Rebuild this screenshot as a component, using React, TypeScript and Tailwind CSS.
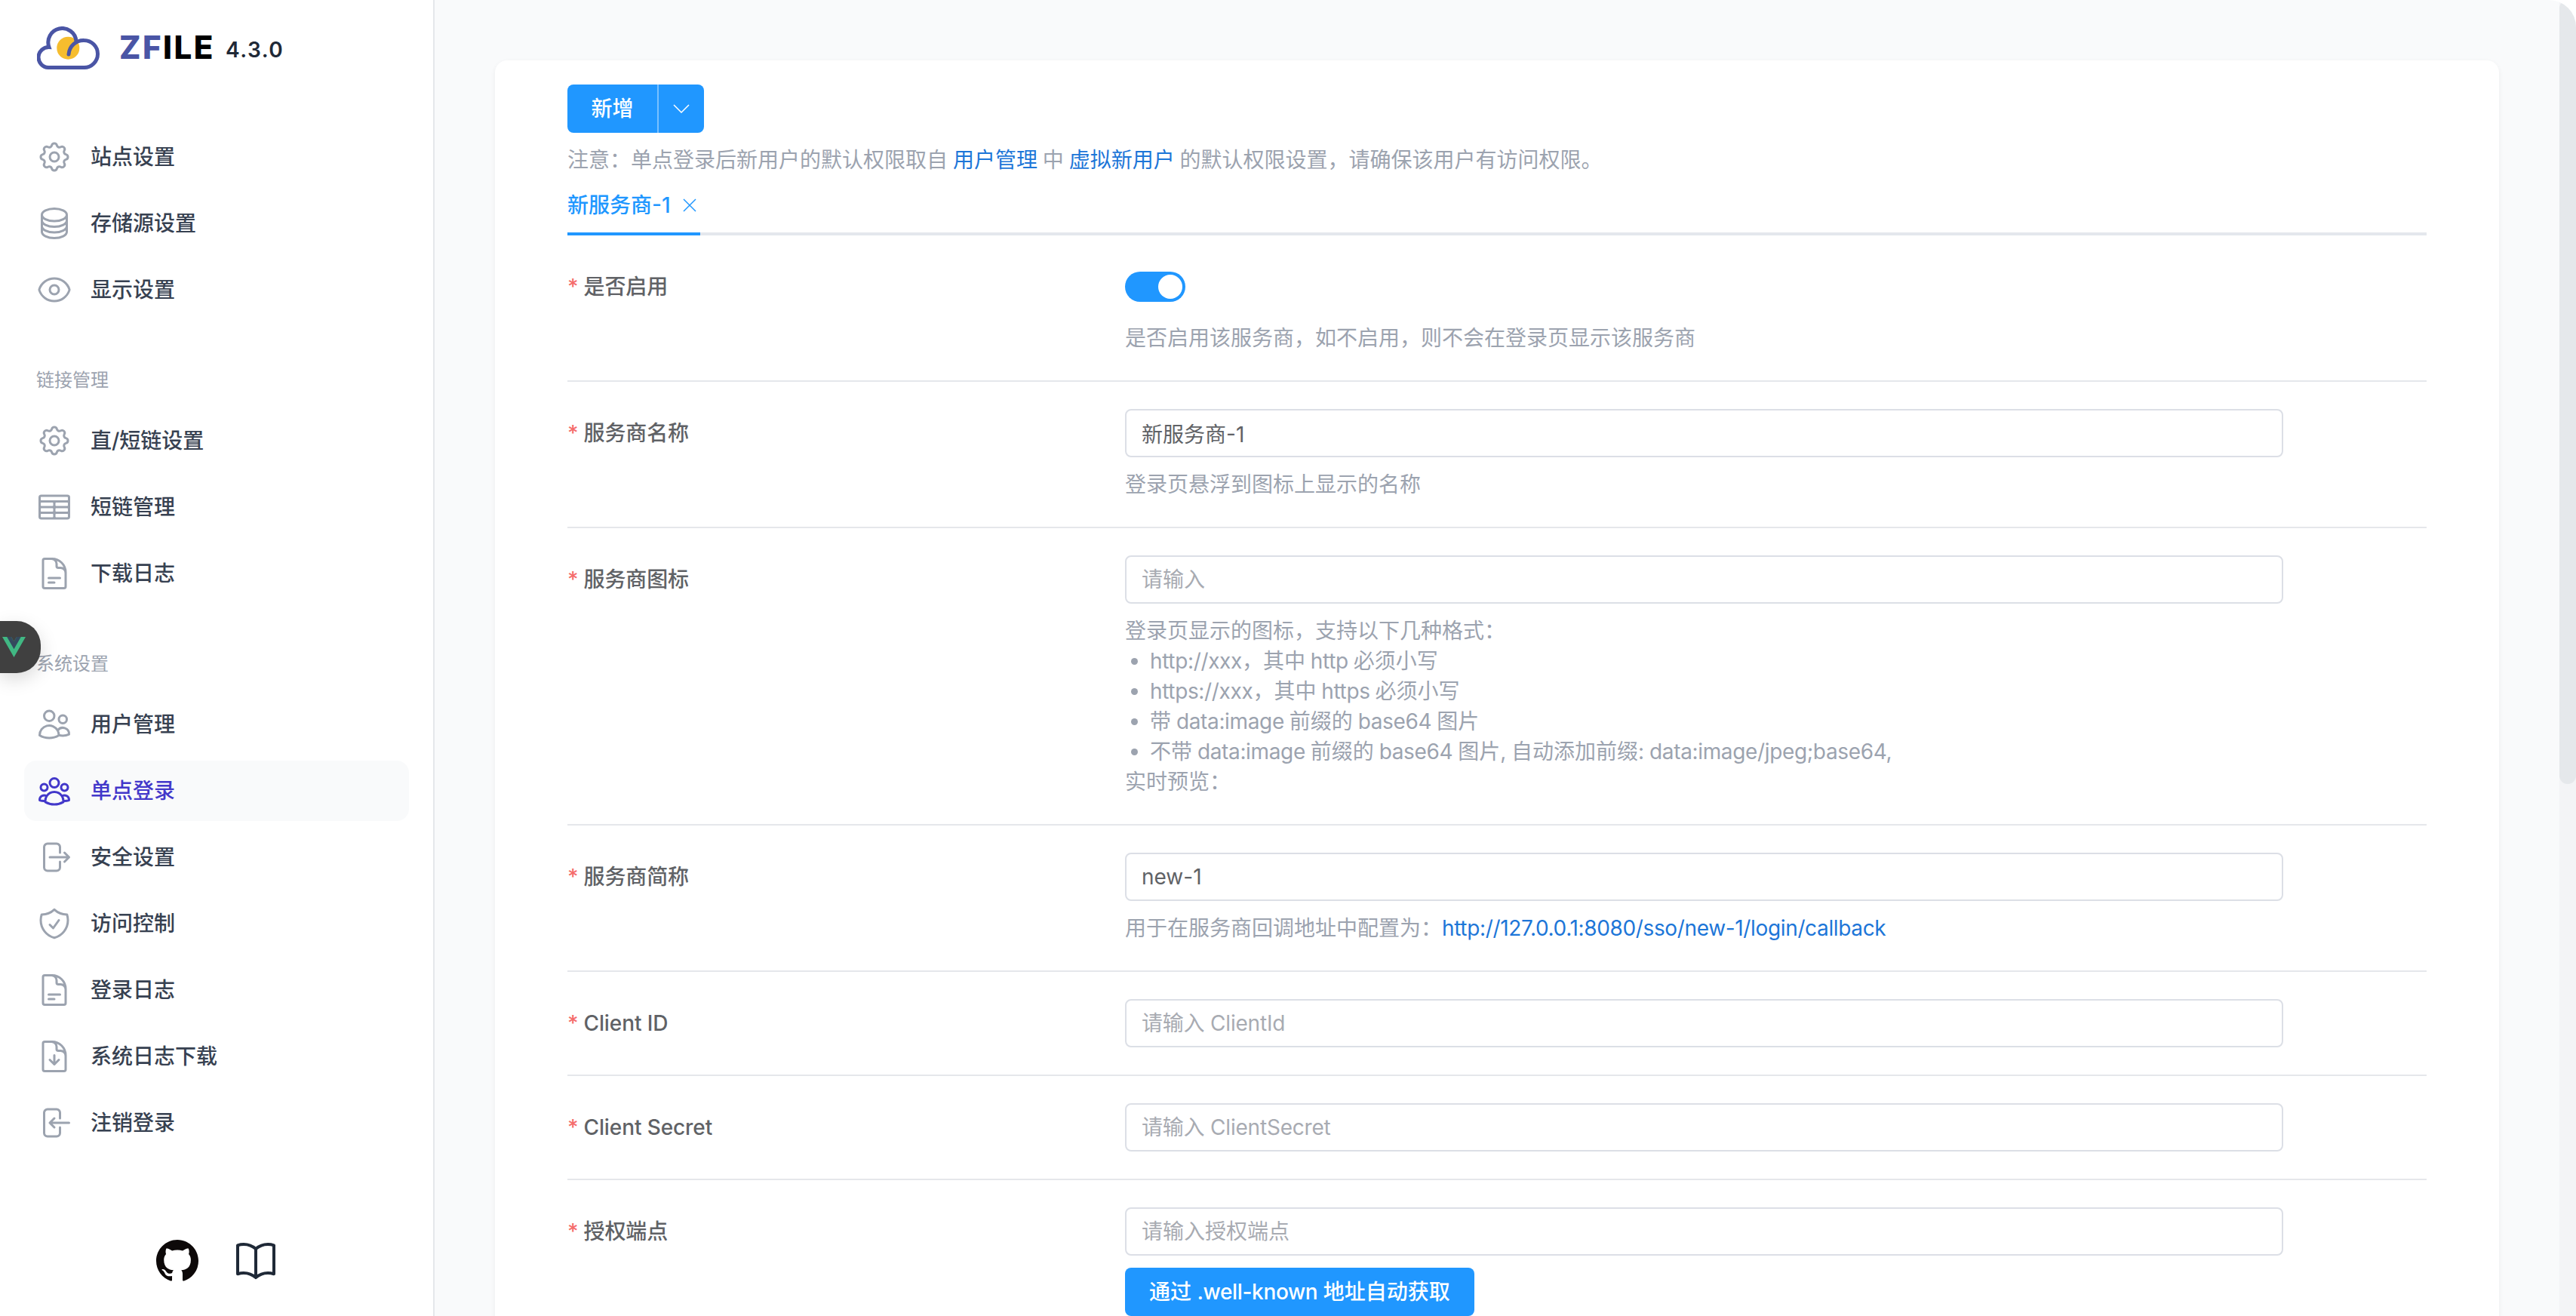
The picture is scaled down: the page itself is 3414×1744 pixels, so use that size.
import React from "react";
import { HiOutlineCog } from "react-icons/hi";
import {
  HiOutlineCircleStack,
  HiOutlineEye,
  HiOutlineTableCells,
  HiOutlineDocumentText,
  HiOutlineUsers,
  HiOutlineUserGroup,
  HiOutlineArrowRightOnRectangle,
  HiOutlineArrowLeftOnRectangle,
  HiOutlineShieldCheck,
  HiOutlineDocumentArrowDown,
  HiOutlineBookOpen,
} from "react-icons/hi2";
import { BsGithub } from "react-icons/bs";

const FONT = "font-['Inter','Noto_Sans_CJK_SC',sans-serif]";

function Cog() {
  return <HiOutlineCog className="w-12 h-12 [&_path]:[stroke-width:1.5]" />;
}

function L({ children }: { children: React.ReactNode }) {
  return <span className="tracking-[-0.35px]">{children}</span>;
}

type Item = { label: string; icon: React.ReactNode; active?: boolean };

const ic = "w-12 h-12";

const groups: { title?: string; items: Item[] }[] = [
  {
    items: [
      { label: "站点设置", icon: <Cog /> },
      { label: "存储源设置", icon: <HiOutlineCircleStack className={ic} /> },
      { label: "显示设置", icon: <HiOutlineEye className={ic} /> },
    ],
  },
  {
    title: "链接管理",
    items: [
      { label: "直/短链设置", icon: <Cog /> },
      { label: "短链管理", icon: <HiOutlineTableCells className={ic} /> },
      { label: "下载日志", icon: <HiOutlineDocumentText className={ic} /> },
    ],
  },
  {
    title: "系统设置",
    items: [
      { label: "用户管理", icon: <HiOutlineUsers className={ic} /> },
      { label: "单点登录", icon: <HiOutlineUserGroup className={ic} />, active: true },
      { label: "安全设置", icon: <HiOutlineArrowRightOnRectangle className={ic} /> },
      { label: "访问控制", icon: <HiOutlineShieldCheck className={ic} /> },
      { label: "登录日志", icon: <HiOutlineDocumentText className={ic} /> },
      { label: "系统日志下载", icon: <HiOutlineDocumentArrowDown className={ic} /> },
      { label: "注销登录", icon: <HiOutlineArrowLeftOnRectangle className={ic} /> },
    ],
  },
];

function Logo() {
  return (
    <svg width="83" height="57" viewBox="0 0 83 57" fill="none" className="shrink-0">
      <circle cx="41.3" cy="28.7" r="15" fill="#f6bd2e" />
      <path
        d="M62.5 54.5H15A13.5 13.5 0 0 1 16 27.5A18.6 18.6 0 1 1 52 19.5"
        stroke="#4a55a5"
        strokeWidth="5"
        strokeLinecap="round"
      />
      <path
        d="M62.5 54.5A18 18 0 0 0 62.5 18.5C52 18 43 26 42 37"
        stroke="#4a55a5"
        strokeWidth="5"
        strokeLinecap="round"
      />
    </svg>
  );
}

function Sidebar() {
  return (
    <aside className="w-[576px] shrink-0 h-full bg-white border-r-2 border-[#e5e7eb] px-8 flex flex-col">
      <div className="h-[168px] shrink-0 pt-[35px] pl-[17px] flex items-start">
        <Logo />
        <span className="ml-[26px] mt-[3px] text-[42px] leading-[50px] font-extrabold tracking-[2.5px]">
          <span className="text-[#4a55a5]">ZF</span>
          <span className="text-black">ILE</span>
        </span>
        <span className="ml-[14px] mt-[13px] text-[28px] leading-[36px] font-semibold tracking-[1.5px] text-[#1f2937]">
          4.3.0
        </span>
      </div>
      <nav className="flex flex-col">
        {groups.map((g, i) => (
          <div key={i} className={g.title ? "mt-16" : ""}>
            {g.title && <div className="h-8 pl-4 mb-6 text-2xl leading-8 text-[#9ca3af]">{g.title}</div>}
            <div className="flex flex-col gap-2">
              {g.items.map((it) => (
                <div
                  key={it.label}
                  className={
                    it.active
                      ? "h-20 pl-4 rounded-2xl flex items-center gap-6 bg-[#f9fafb] text-[#4338ca] text-[28px] font-medium"
                      : "h-20 pl-4 rounded-2xl flex items-center gap-6 text-[#374151] text-[28px] font-medium"
                  }
                >
                  <span className={it.active ? "text-[#4338ca]" : "text-[#9ca3af]"}>{it.icon}</span>
                  <span>{it.label}</span>
                </div>
              ))}
            </div>
          </div>
        ))}
      </nav>
      <div className="mt-auto h-[146px] pl-1 flex items-center justify-center gap-[44px]">
        <BsGithub className="w-14 h-14 text-[#0d0909]" />
        <HiOutlineBookOpen className="w-16 h-16 text-[#1f2937]" />
      </div>
    </aside>
  );
}

function Label({ text, h }: { text: string; h: string }) {
  return (
    <div className={`w-[739px] shrink-0 flex items-center text-[28px] font-medium text-[#606266] tracking-[-0.1px] ${h}`}>
      <span className="text-[#f56c6c] mr-[7px]">*</span>
      {text}
    </div>
  );
}

function Field({ value, placeholder, tight }: { value?: string; placeholder?: string; tight?: boolean }) {
  return (
    <input
      readOnly
      value={value ?? ""}
      placeholder={placeholder}
      className={
        tight
          ? "block w-[1535px] h-16 rounded-lg border-2 border-[#dcdfe6] bg-white px-5 text-[28px] tracking-[-0.2px] text-[#606266] outline-none placeholder:text-[#a8abb2]"
          : "block w-[1535px] h-16 rounded-lg border-2 border-[#dcdfe6] bg-white px-5 text-[28px] text-[#606266] outline-none placeholder:text-[#a8abb2]"
      }
    />
  );
}

function Row({
  label,
  children,
  last,
  h = "h-16",
}: {
  label: string;
  children: React.ReactNode;
  last?: boolean;
  h?: string;
}) {
  return (
    <div className={last ? "flex pt-9" : "flex py-9 border-b-2 border-[#e5e7eb]"}>
      <Label text={label} h={h} />
      <div className="flex-1">{children}</div>
    </div>
  );
}

const desc = "mt-4 text-[28px] leading-10 text-[#9ca3af] [word-spacing:-1px]";
const link = "text-[#1d76d8]";

function Main() {
  return (
    <main className="flex-1 min-w-0 h-full bg-[#f9fafb] px-20 pt-20 overflow-hidden">
      <div className="bg-white rounded-2xl shadow-[0_2px_6px_rgba(0,0,0,0.06)] px-24 pt-8 pb-10">
        <div className="flex w-[181px] h-16 rounded-lg bg-[#2097ff] text-white text-[28px] font-medium">
          <div className="w-[119px] flex items-center justify-center">新增</div>
          <div className="flex-1 border-l-2 border-white/40 flex items-center justify-center">
            <svg width="22" height="12" viewBox="0 0 22 12" fill="none">
              <path d="M1 1L11 11L21 1" stroke="white" strokeWidth="1.5" />
            </svg>
          </div>
        </div>
        <p className={desc}>
          注意：单点登录后新用户的默认权限取自 <a className={link}>用户管理</a> 中 <a className={link}>虚拟新用户</a>{" "}
          的默认权限设置，请确保该用户有访问权限。
        </p>
        <div className="border-b-4 border-[#e4e7ed] flex">
          <div className="-mb-1 border-b-4 border-[#2097ff] pt-5 pb-4 w-[176px] flex items-center text-[#2097ff] text-[28px] leading-10 font-medium">
            <span>新服务商-1</span>
            <svg width="18" height="18" viewBox="0 0 18 18" fill="none" className="ml-4 shrink-0">
              <path d="M1 1L17 17M17 1L1 17" stroke="#2097ff" strokeWidth="1.5" />
            </svg>
          </div>
        </div>
        <div className="mt-3 flex flex-col">
          <Row label="是否启用" h="h-10">
            <div className="h-11">
              <div className="w-20 h-10 rounded-full bg-[#2097ff] flex items-center justify-end pr-1">
                <div className="w-8 h-8 rounded-full bg-white" />
              </div>
            </div>
            <p className="mt-6 text-[28px] leading-10 text-[#9ca3af]">是否启用该服务商，如不启用，则不会在登录页显示该服务商</p>
          </Row>
          <Row label="服务商名称">
            <Field value="新服务商-1" />
            <p className={desc}>登录页悬浮到图标上显示的名称</p>
          </Row>
          <Row label="服务商图标">
            <Field placeholder="请输入" />
            <div className={desc}>
              <div>登录页显示的图标，支持以下几种格式：</div>
              <ul className="list-disc pl-[33px]">
                <li>
                  <L>http://xxx</L>，其中 <L>http</L> 必须小写
                </li>
                <li>
                  <L>https://xxx</L>，其中 <L>https</L> 必须小写
                </li>
                <li>
                  带 <L>data:image</L> 前缀的 <L>base64</L> 图片
                </li>
                <li>
                  不带 <L>data:image</L> 前缀的 <L>base64</L> 图片, 自动添加前缀: <L>data:image/jpeg;base64,</L>
                </li>
              </ul>
              <div>实时预览：</div>
            </div>
          </Row>
          <Row label="服务商简称">
            <Field value="new-1" />
            <p className={desc}>
              用于在服务商回调地址中配置为：
              <a className={link}>
                <L>http://127.0.0.1:8080/sso/new-1/login/callback</L>
              </a>
            </p>
          </Row>
          <Row label="Client ID">
            <Field placeholder="请输入 ClientId" tight />
          </Row>
          <Row label="Client Secret">
            <Field placeholder="请输入 ClientSecret" tight />
          </Row>
          <Row label="授权端点" last>
            <Field placeholder="请输入授权端点" />
            <button className="mt-4 h-16 px-8 rounded-lg bg-[#2097ff] text-white text-[28px] font-medium">
              通过 <L>.well-known</L> 地址自动获取
            </button>
          </Row>
        </div>
      </div>
    </main>
  );
}

function VueBadge() {
  return (
    <div className="absolute left-0 top-[823px] w-[54px] h-[69px] rounded-r-[32px] bg-[#404040] shadow-[0_8px_24px_rgba(0,0,0,0.15)] flex items-center pl-[3px]">
      <svg width="31" height="27" viewBox="0 0 261.76 226.69">
        <path d="M161.096.001l-30.225 52.351L100.647.001H-.005l130.877 226.688L261.749.001z" fill="#41b883" />
        <path d="M161.096.001l-30.225 52.351L100.647.001H52.346l78.526 136.01L209.398.001z" fill="#34495e" />
      </svg>
    </div>
  );
}

function ScrollRail() {
  return (
    <div className="w-[22px] shrink-0 h-full bg-[#f3f4f6]">
      <div className="h-[1039px] w-full rounded-[11px] bg-[#e5e8eb]" />
    </div>
  );
}

export default function App() {
  return (
    <div className="bg-white">
      <div className={`${FONT} relative flex h-screen w-full overflow-hidden rounded-tr-[36px]`}>
        <Sidebar />
        <Main />
        <ScrollRail />
        <VueBadge />
      </div>
    </div>
  );
}
